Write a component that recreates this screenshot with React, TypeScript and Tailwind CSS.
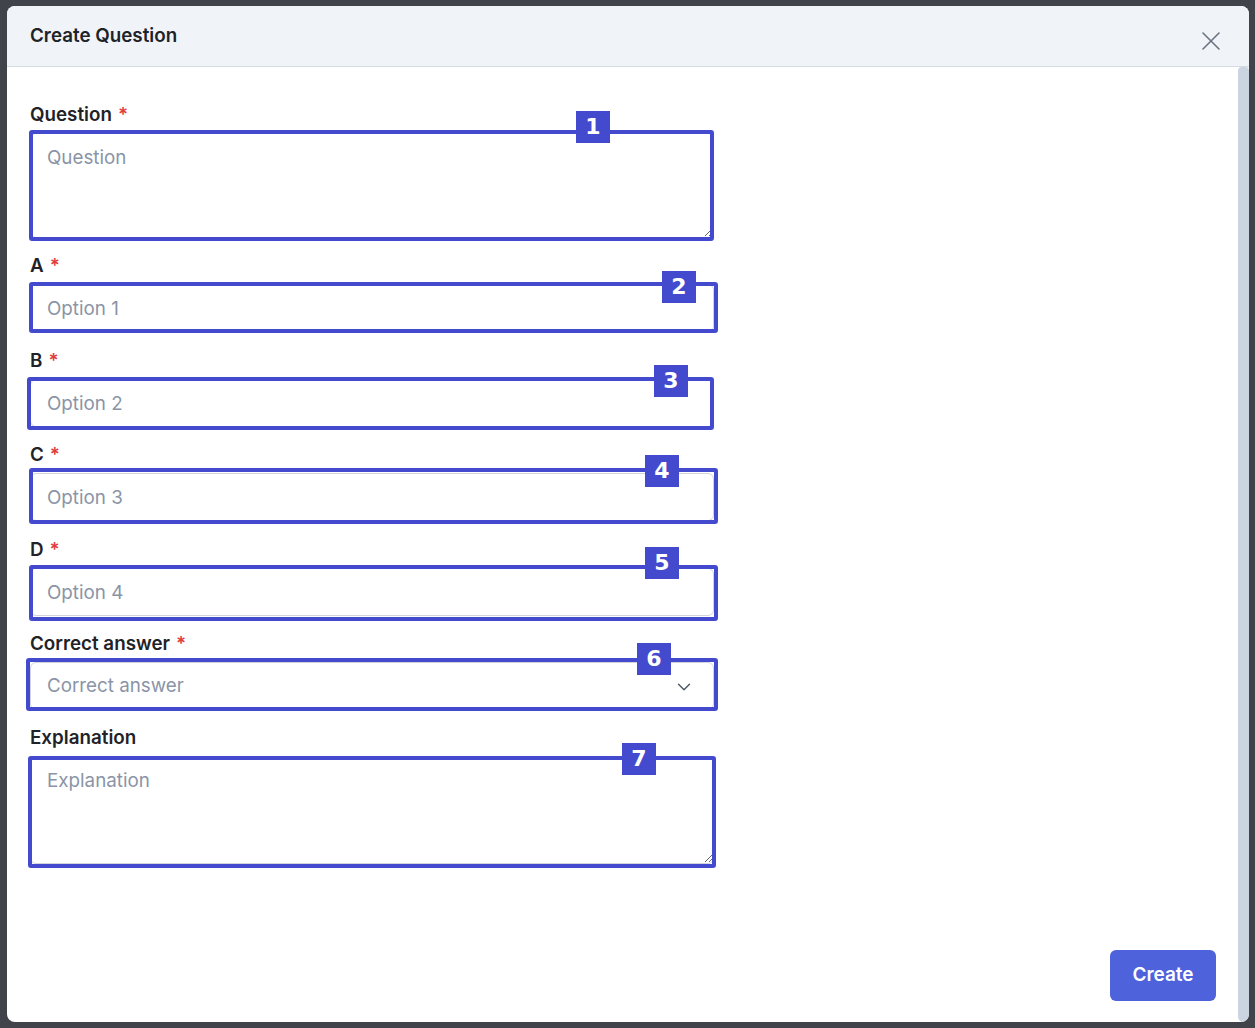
import { ChevronDown } from 'lucide-react';
import type { ReactNode } from 'react';

type Mark = { n: number; box: string; badge: string };

// numbered annotation frames drawn over the form controls
const MARKS: Record<string, Mark> = {
  question: { n: 1, box: 'left-[-1px] top-[-3px] w-[685px] h-[111px]', badge: 'left-[546px] top-[-22px]' },
  a: { n: 2, box: 'left-[-1px] top-[-2px] w-[689px] h-[51px]', badge: 'left-[632px] top-[-13px]' },
  b: { n: 3, box: 'left-[-3px] top-[-2px] w-[687px] h-[53px]', badge: 'left-[624px] top-[-14px]' },
  c: { n: 4, box: 'left-[-1px] top-[-5px] w-[689px] h-[56px]', badge: 'left-[615px] top-[-18px]' },
  d: { n: 5, box: 'left-[-1px] top-[-3px] w-[689px] h-[56px]', badge: 'left-[615px] top-[-21px]' },
  answer: { n: 6, box: 'left-[-4px] top-[-4px] w-[692px] h-[53px]', badge: 'left-[607px] top-[-19px]' },
  explanation: { n: 7, box: 'left-[-2px] top-0 w-[688px] h-[112px]', badge: 'left-[592px] top-[-13px]' },
};

function Field({ label, required, mark, gap, children }: { label: string; required?: boolean; mark: Mark; gap: string; children: ReactNode }) {
  return (
    <div className={gap}>
      <div className="mb-[6px] h-6 text-[18.8px] leading-6 font-semibold text-[#1f2328]">
        {label}
        {required && <span className="ml-1.5 text-[#e03c3c]">*</span>}
      </div>
      <div className="relative w-[684px]">
        {children}
        <div className={`pointer-events-none absolute rounded-[3px] border-4 border-[#434acd] ${mark.box}`} />
        <div
          className={`absolute flex h-[32px] w-[34px] items-center justify-center bg-[#434acd] text-[22px] font-bold leading-none text-white ${mark.badge}`}
          style={{ fontFamily: '"DejaVu Sans", sans-serif' }}
        >
          {mark.n}
        </div>
      </div>
    </div>
  );
}

const inputCls =
  'block h-12 w-full rounded-md border border-[#d1d5db] bg-white px-4 text-[18.8px] text-[#1f2328] outline-none placeholder:text-[#8a94a6]';
const areaCls =
  'block w-full rounded-md border border-[#d1d5db] bg-white px-4 pt-[10px] text-[18.8px] text-[#1f2328] outline-none placeholder:text-[#8a94a6]';

export default function App() {
  return (
    <div className="h-[1028px] w-[1255px] bg-[#404349] pl-[7px] pt-[6px]" style={{ fontFamily: 'Inter, "Noto Sans", sans-serif' }}>
      <div className="flex h-[1016px] w-[1242px] flex-col overflow-hidden rounded-lg bg-white">
        {/* header */}
        <div className="flex h-[61px] shrink-0 items-center justify-between border-b border-[#d3dbe4] bg-[#f0f4f9] pl-[23px] pr-[29px]">
          <h2 className="text-[18.8px] font-semibold text-[#1f2328]">Create Question</h2>
          <svg width="18" height="18" viewBox="0 0 18 18" className="mt-[9px]" fill="none" stroke="#6b7280" strokeWidth="1.6" strokeLinecap="round">
            <path d="M1 1 L17 17 M17 1 L1 17" />
          </svg>
        </div>

        {/* body */}
        <div className="flex min-h-0 flex-1">
          <div className="flex flex-1 flex-col pb-[21px] pl-[23px] pr-[22px] pt-[36px]">
            <Field label="Question" required mark={MARKS.question} gap="mb-4">
              <textarea className={`${areaCls} h-[105px]`} placeholder="Question" />
            </Field>
            <Field label="A" required mark={MARKS.a} gap="mb-[17px]">
              <input className={inputCls} placeholder="Option 1" />
            </Field>
            <Field label="B" required mark={MARKS.b} gap="mb-4">
              <input className={inputCls} placeholder="Option 2" />
            </Field>
            <Field label="C" required mark={MARKS.c} gap="mb-[17px]">
              <input className={inputCls} placeholder="Option 3" />
            </Field>
            <Field label="D" required mark={MARKS.d} gap="mb-4">
              <input className={inputCls} placeholder="Option 4" />
            </Field>
            <Field label="Correct answer" required mark={MARKS.answer} gap="mb-4">
              <div className="flex h-12 w-full items-center justify-between rounded-md border border-[#d1d5db] bg-white pl-4 pr-[18px] text-[18.8px] text-[#8a94a6]">
                <span>Correct answer</span>
                <ChevronDown size={22} strokeWidth={1.5} className="mt-px text-[#4b5563]" />
              </div>
            </Field>
            <Field label="Explanation" mark={MARKS.explanation} gap="mb-4">
              <textarea className={`${areaCls} h-[108px]`} placeholder="Explanation" />
            </Field>

            <div className="mt-auto flex justify-end">
              <button className="h-[51px] w-[106px] rounded-md bg-[#4e62dc] text-[19px] font-semibold text-white">Create</button>
            </div>
          </div>
          {/* scrollbar thumb */}
          <div className="w-[11px] shrink-0 rounded-t-[4px] rounded-b-[6px] bg-[#cbd5e1]" />
        </div>
      </div>
    </div>
  );
}
